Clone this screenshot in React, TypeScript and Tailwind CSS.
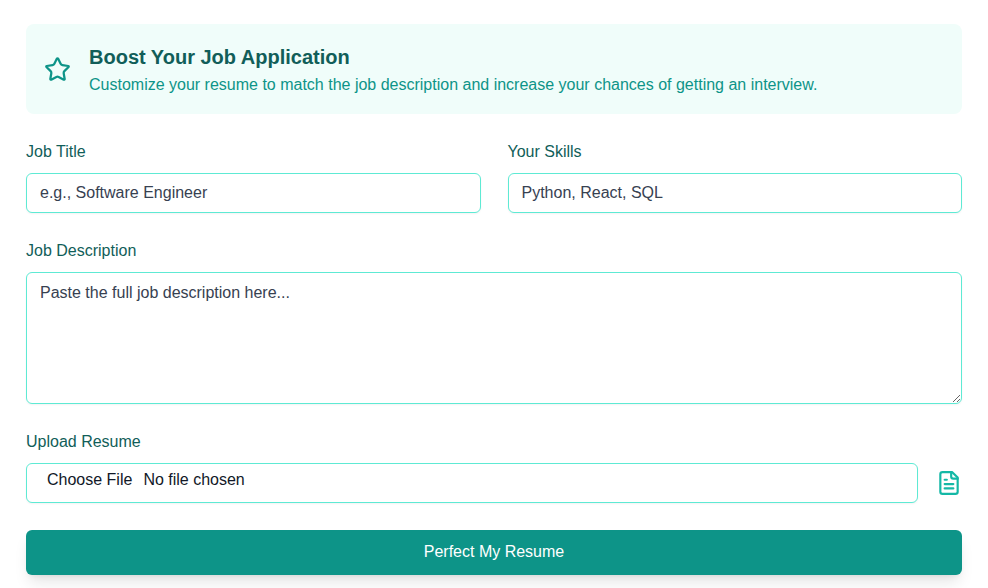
import { Star } from "lucide-react";
import type { ReactNode } from "react";

const fieldClass =
  "block w-full min-w-0 rounded-md border border-[#5eead4] bg-white px-[13px] text-base text-[#111827] shadow-xs outline-none placeholder:text-[#374151] placeholder:opacity-100 focus:ring-2 focus:ring-[#14b8a6]";

function Field({ id, label, children }: { id: string; label: string; children: ReactNode }) {
  return (
    <div>
      <label htmlFor={id} className="mb-2.5 block text-base leading-[22px] text-[#115e59]">
        {label}
      </label>
      {children}
    </div>
  );
}

function DocumentIcon() {
  return (
    <svg
      viewBox="0 0 24 24"
      fill="none"
      stroke="currentColor"
      strokeWidth="2"
      strokeLinecap="round"
      strokeLinejoin="round"
      className="size-[26px] shrink-0 text-[#14b8a6]"
      aria-hidden="true"
    >
      <path d="M15 2H6a2 2 0 0 0-2 2v16a2 2 0 0 0 2 2h12a2 2 0 0 0 2-2V7Z" />
      <path d="M14 2v4a2 2 0 0 0 2 2h4" />
      <path d="M10 9H8" />
      <path d="M16 13H8" />
      <path d="M16 17H8" />
    </svg>
  );
}

export default function App() {
  return (
    <main className="px-[26px] py-6 font-['Liberation_Sans',Arial,sans-serif]">
      <section className="mb-[27px] flex items-center gap-[18px] rounded-lg bg-[#f0fdfa] p-[18px]">
        <Star size={27} className="shrink-0 text-[#0d9488]" aria-hidden="true" />
        <div>
          <h2 className="mb-0.5 text-xl leading-[30px] font-bold text-[#115e59]">Boost Your Job Application</h2>
          <p className="text-base leading-[22px] text-[#0d9488]">
            Customize your resume to match the job description and increase your chances of getting an interview.
          </p>
        </div>
      </section>

      <form className="flex flex-col gap-[27px]" onSubmit={(event) => event.preventDefault()}>
        <div className="grid grid-cols-2 gap-[27px]">
          <Field id="job-title" label="Job Title">
            <input id="job-title" type="text" placeholder="e.g., Software Engineer" className={`${fieldClass} h-10`} />
          </Field>
          <Field id="skills" label="Your Skills">
            <input id="skills" type="text" placeholder="Python, React, SQL" className={`${fieldClass} h-10`} />
          </Field>
        </div>

        <Field id="job-description" label="Job Description">
          <textarea
            id="job-description"
            placeholder="Paste the full job description here..."
            className={`${fieldClass} h-33 resize-y py-2 leading-6`}
          />
        </Field>

        <Field id="resume" label="Upload Resume">
          <div className="flex items-center gap-[18px]">
            <input
              id="resume"
              type="file"
              className={`${fieldClass} h-10 py-1 leading-6 file:mr-1 file:border-0 file:bg-transparent file:px-[7px] file:text-base file:leading-6 file:text-[#111827]`}
            />
            <DocumentIcon />
          </div>
        </Field>

        <button
          type="submit"
          className="w-full rounded-md bg-[#0d9488] pt-2.5 pb-[11px] text-base leading-6 text-white shadow-lg hover:bg-[#0f766e]"
        >
          Perfect My Resume
        </button>
      </form>
    </main>
  );
}
